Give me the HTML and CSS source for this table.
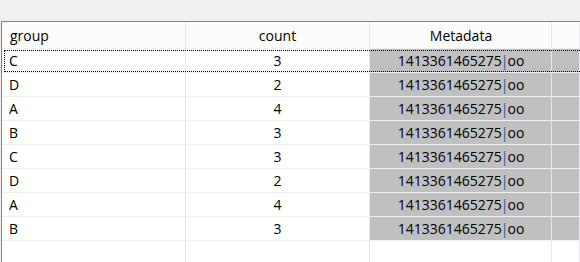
FILE: index.html
```html
<!DOCTYPE html>
<html>
<head>
<meta charset="utf-8">
<link rel="stylesheet" href="styles.css">
</head>
<body>
<div class="frame">
  <div class="row head">
    <div class="cell c1 left">group</div>
    <div class="cell c2">count</div>
    <div class="cell c3">Metadata</div>
    <div class="cell c4"></div>
  </div>
  <div class="row focused">
    <div class="cell c1 left">C</div>
    <div class="cell c2">3</div>
    <div class="cell c3 sel">1413361465275<span class="bar">|</span>oo</div>
    <div class="cell c4 sel"></div>
    <div class="focus"></div>
  </div>
  <div class="row">
    <div class="cell c1 left">D</div>
    <div class="cell c2">2</div>
    <div class="cell c3 sel">1413361465275<span class="bar">|</span>oo</div>
    <div class="cell c4 sel"></div>
  </div>
  <div class="row">
    <div class="cell c1 left">A</div>
    <div class="cell c2">4</div>
    <div class="cell c3 sel">1413361465275<span class="bar">|</span>oo</div>
    <div class="cell c4 sel"></div>
  </div>
  <div class="row">
    <div class="cell c1 left">B</div>
    <div class="cell c2">3</div>
    <div class="cell c3 sel">1413361465275<span class="bar">|</span>oo</div>
    <div class="cell c4 sel"></div>
  </div>
  <div class="row">
    <div class="cell c1 left">C</div>
    <div class="cell c2">3</div>
    <div class="cell c3 sel">1413361465275<span class="bar">|</span>oo</div>
    <div class="cell c4 sel"></div>
  </div>
  <div class="row">
    <div class="cell c1 left">D</div>
    <div class="cell c2">2</div>
    <div class="cell c3 sel">1413361465275<span class="bar">|</span>oo</div>
    <div class="cell c4 sel"></div>
  </div>
  <div class="row">
    <div class="cell c1 left">A</div>
    <div class="cell c2">4</div>
    <div class="cell c3 sel">1413361465275<span class="bar">|</span>oo</div>
    <div class="cell c4 sel"></div>
  </div>
  <div class="row">
    <div class="cell c1 left">B</div>
    <div class="cell c2">3</div>
    <div class="cell c3 sel">1413361465275<span class="bar">|</span>oo</div>
    <div class="cell c4 sel"></div>
  </div>
  <div class="row filler">
    <div class="cell c1"></div>
    <div class="cell c2"></div>
    <div class="cell c3"></div>
    <div class="cell c4"></div>
  </div>
</div>
</body>
</html>
```

FILE: styles.css
```css
html, body {
  margin: 0;
  padding: 0;
  background: #f0f0f0;
  overflow: hidden;
}

body {
  width: 580px;
  height: 262px;
  font-family: "Open Sans", "Noto Sans", sans-serif;
  font-size: 14px;
  color: #000;
}

.frame {
  margin-top: 21px;
  margin-left: 1px;
  height: 241px;
  box-sizing: border-box;
  border-top: 1px solid #828282;
  border-left: 1px solid #828282;
  background: #fff;
  display: flex;
  flex-direction: column;
  overflow: hidden;
}

.row {
  position: relative;
  display: grid;
  grid-template-columns: 184px 184px 182px 1fr;
  height: 24px;
  flex: none;
  box-sizing: border-box;
  border-bottom: 1px solid #efefef;
}

.row.head {
  height: 27px;
  background: #fcfcfc;
  padding-top: 1px;
}

.row.filler {
  flex: 1 1 auto;
  border-bottom: none;
}

.cell {
  box-sizing: border-box;
  border-right: 1px solid #e4e9f1;
  display: flex;
  align-items: center;
  justify-content: center;
  white-space: nowrap;
  line-height: 1;
}

.cell.left {
  justify-content: flex-start;
  padding-left: 7px;
}

.head .cell.left {
  padding-left: 8px;
}

.cell.sel {
  background: #c0c0c0;
}

.cell.c3 {
  padding-left: 1px;
}

.bar {
  color: #2b5d9a;
  margin: 0 -1px;
}

.focus {
  position: absolute;
  left: 2px;
  top: 1px;
  right: -10px;
  height: 22px;
  box-sizing: border-box;
  border: 1px dotted #000;
}
```
